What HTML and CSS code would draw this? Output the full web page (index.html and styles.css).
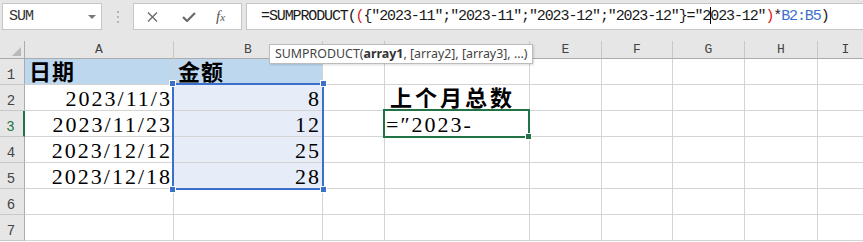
FILE: index.html
```html
<!DOCTYPE html>
<html>
  <head>
    <meta charset="UTF-8" />
    <title>SUMPRODUCT</title>
    <link rel="stylesheet" href="styles.css">
  </head>
  <body>
    <div class="toolbar">
      <div class="namebox"><span>SUM</span><span class="drop"></span></div>
      <div class="grip"><i></i><i></i><i></i></div>
      <div class="fbtns">
        <svg class="ico-x" width="11" height="10" viewBox="0 0 11 10"><path d="M1 0.5 L10 9.5 M10 0.5 L1 9.5" stroke="#6a6a6a" stroke-width="1.4" fill="none"/></svg>
        <svg class="ico-ok" width="14" height="10" viewBox="0 0 14 10"><path d="M1 5 L5 9 L13 1" stroke="#6a6a6a" stroke-width="2.2" fill="none"/></svg>
        <span class="fx">f<small>x</small></span>
      </div>
      <div class="formula">=SUMPRODUCT(<span class="red">(</span>{"2023-11";"2023-11";"2023-12";"2023-12"}="2<span class="caret"></span>023-12"<span class="red">)</span>*<span class="blue">B2:B5</span>)</div>
    </div>

    <div class="sheet">
      <div class="grid">
        <div class="corner"><span class="tri"></span></div>
        <div class="colhd">A</div>
        <div class="colhd">B</div>
        <!-- C and D labels sit under the function tooltip -->
        <div class="colhd"></div>
        <div class="colhd"></div>
        <div class="colhd">E</div>
        <div class="colhd">F</div>
        <div class="colhd">G</div>
        <div class="colhd">H</div>
        <div class="colhd">I</div>

        <div class="rowhd">1</div>
        <div class="c cn hl">日期</div>
        <div class="c cn hl">金额</div>
        <div class="c"></div><div class="c"></div><div class="c"></div><div class="c"></div><div class="c"></div><div class="c"></div><div class="c"></div>

        <div class="rowhd">2</div>
        <div class="c r">2023/11/3</div>
        <div class="c r sb">8</div>
        <div class="c"></div>
        <div class="c cn wide">上个月总数</div>
        <div class="c"></div><div class="c"></div><div class="c"></div><div class="c"></div><div class="c"></div>

        <div class="rowhd on">3</div>
        <div class="c r">2023/11/23</div>
        <div class="c r sb">12</div>
        <div class="c"></div>
        <div class="c edit">=″2023-</div>
        <div class="c"></div><div class="c"></div><div class="c"></div><div class="c"></div><div class="c"></div>

        <div class="rowhd">4</div>
        <div class="c r">2023/12/12</div>
        <div class="c r sb">25</div>
        <div class="c"></div><div class="c"></div><div class="c"></div><div class="c"></div><div class="c"></div><div class="c"></div><div class="c"></div>

        <div class="rowhd">5</div>
        <div class="c r">2023/12/18</div>
        <div class="c r sb">28</div>
        <div class="c"></div><div class="c"></div><div class="c"></div><div class="c"></div><div class="c"></div><div class="c"></div><div class="c"></div>

        <div class="rowhd">6</div>
        <div class="c"></div><div class="c"></div><div class="c"></div><div class="c"></div><div class="c"></div><div class="c"></div><div class="c"></div><div class="c"></div><div class="c"></div>

        <div class="rowhd">7</div>
        <div class="c"></div><div class="c"></div><div class="c"></div><div class="c"></div><div class="c"></div><div class="c"></div><div class="c"></div><div class="c"></div><div class="c"></div>
      </div>

      <!-- range B2:B5 referenced by the formula -->
      <div class="sel">
        <i class="hdl tl"></i><i class="hdl tr"></i><i class="hdl bl"></i><i class="hdl br"></i>
      </div>
      <!-- active cell D3 -->
      <div class="active"><i class="fill"></i></div>

      <div class="tip">SUMPRODUCT(<b>array1</b>, [array2], [array3], ...)</div>
    </div>
  </body>
</html>
```

FILE: styles.css
```css
body {
	margin: 0;
	background: #fff;
	overflow: hidden;
	font-family: "Liberation Serif", serif;
}

/* formula bar */
.toolbar {
	display: flex;
	align-items: flex-start;
	height: 41px;
	padding-top: 3px;
	box-sizing: border-box;
	background: #e6e6e6;
}
.namebox {
	margin-left: 2px;
	width: 100px;
	height: 27px;
	box-sizing: border-box;
	border: 1px solid #c6c6c6;
	background: #fff;
	display: flex;
	align-items: center;
	justify-content: space-between;
	padding: 0 5px 0 6px;
	font: 15px/1 "Liberation Mono", monospace;
	letter-spacing: -1px;
	color: #333;
}
.drop {
	border-left: 4px solid transparent;
	border-right: 4px solid transparent;
	border-top: 4px solid #7a7a7a;
}
.grip {
	width: 31px;
	height: 27px;
	display: flex;
	flex-direction: column;
	align-items: center;
	justify-content: center;
	gap: 3px;
}
.grip i {
	width: 2px;
	height: 2px;
	background: #b4b4b4;
}
.fbtns {
	width: 109px;
	height: 27px;
	box-sizing: border-box;
	border: 1px solid #c6c6c6;
	background: #fff;
	display: flex;
	align-items: center;
}
.ico-x { margin-left: 13px; }
.ico-ok { margin-left: 24px; }
.fx {
	margin-left: 20px;
	font: italic 15px/1 "Liberation Serif", serif;
	color: #555;
}
.fx small {
	font-size: 11px;
}
.formula {
	margin-left: 4px;
	flex: 1;
	height: 27px;
	box-sizing: border-box;
	border: 1px solid #c6c6c6;
	border-right: none;
	background: #fff;
	padding-left: 14px;
	font: 15px/25px "Liberation Mono", monospace;
	letter-spacing: -1.12px;
	white-space: nowrap;
	color: #1a1a1a;
}
.red { color: #e0201c; }
.blue { color: #3b6fcc; }
.caret {
	display: inline-block;
	width: 0;
	height: 17px;
	border-left: 1px solid #000;
	margin-right: -1px;
	vertical-align: -4px;
}

/* sheet */
.sheet {
	position: relative;
}
.grid {
	display: grid;
	grid-template-columns: 25px 149px 149px 62px 145px 72px 71px 72px 73px 56px;
	grid-template-rows: 18px repeat(7, 26px);
}
.corner, .colhd, .rowhd, .c {
	box-sizing: border-box;
}
.corner {
	background: #e6e6e6;
	border-right: 1px solid #ababab;
	border-bottom: 1px solid #ababab;
	position: relative;
}
.tri {
	position: absolute;
	right: 3px;
	bottom: 2px;
	border-left: 9px solid transparent;
	border-bottom: 9px solid #b9b9b9;
}
.colhd {
	background: #e6e6e6;
	border-right: 1px solid #c8c8c8;
	border-bottom: 1px solid #ababab;
	text-align: center;
	font: 13px/17px "Liberation Mono", monospace;
	color: #444;
}
.rowhd {
	background: #e6e6e6;
	border-right: 1px solid #ababab;
	border-bottom: 1px solid #c8c8c8;
	display: flex;
	align-items: flex-end;
	justify-content: center;
	padding: 0 2px 2px 0;
	font: 14px/14px "Liberation Mono", monospace;
	color: #444;
}
.rowhd.on {
	color: #217346;
	border-right: 2px solid #217346;
}
.c {
	border-right: 1px solid #d4d4d4;
	border-bottom: 1px solid #d4d4d4;
	display: flex;
	align-items: flex-end;
	font-size: 22px;
	line-height: 22px;
	color: #000;
	white-space: nowrap;
}
.c.r {
	justify-content: flex-end;
	letter-spacing: 2px;
	padding-right: 1px;
}
.c.cn {
	font-family: "Noto Sans CJK SC", sans-serif;
	font-weight: 700;
	line-height: 28px;
	padding: 0 0 0 4px;
	letter-spacing: 1px;
}
.c.cn.wide {
	letter-spacing: 3px;
	padding-left: 5px;
}
.c.edit {
	padding-left: 1px;
	letter-spacing: 2px;
}
.hl { background: #bdd7ee; }
.sb { background: #e6edf8; }

/* overlays */
.sel {
	position: absolute;
	left: 172px;
	top: 42px;
	width: 152px;
	height: 107px;
	box-sizing: border-box;
	border: 2px solid #3b6fcc;
}
.hdl {
	position: absolute;
	width: 5px;
	height: 5px;
	background: #3b6fcc;
	border: 1px solid #fff;
}
.tl { left: -5px; top: -5px; }
.tr { right: -5px; top: -5px; }
.bl { left: -5px; bottom: -5px; }
.br { right: -5px; bottom: -5px; }

.active {
	position: absolute;
	left: 383px;
	top: 68px;
	width: 147px;
	height: 29px;
	box-sizing: border-box;
	border: 2px solid #217346;
}
.fill {
	position: absolute;
	right: -4px;
	bottom: -4px;
	width: 5px;
	height: 5px;
	background: #217346;
	border: 1px solid #fff;
}

.tip {
	position: absolute;
	left: 269px;
	top: 3px;
	width: 264px;
	height: 20px;
	box-sizing: border-box;
	padding-left: 5px;
	background: #fff;
	border: 1px solid #bcbcbc;
	box-shadow: 1px 1px 2px rgba(0, 0, 0, 0.15);
	font: 12.4px/18px "Noto Sans", sans-serif;
	color: #444;
	white-space: nowrap;
}
.tip b {
	color: #333;
}
```
